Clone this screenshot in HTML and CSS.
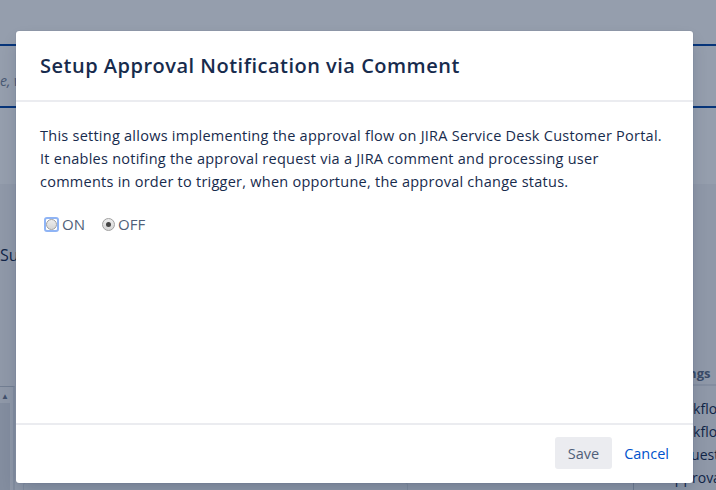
FILE: index.html
```html
<!DOCTYPE html>
<html lang="en">
<head>
    <meta charset="UTF-8">
    <title>Setup Approval Notification</title>
    <link rel="stylesheet" href="styles.css">
</head>
<body>
    <!-- page behind the dialog -->
    <div class="page">
        <div class="page-top">
            <div class="rule"></div>
            <div class="hint">e, when</div>
            <div class="rule"></div>
        </div>
        <div class="page-main">
            <div class="section-title">Summary</div>
            <div class="lower">
                <div class="left-panel">
                    <div class="scroll-up">&#9650;</div>
                    <div class="scroll-box"></div>
                </div>
                <div class="bottom-box"></div>
                <div class="side-list">
                    <div class="side-head">Settings</div>
                    <div class="side-item">Workflow</div>
                    <div class="side-item">Workflow</div>
                    <div class="side-item">Request</div>
                    <div class="side-item">Approvals via</div>
                </div>
            </div>
        </div>
    </div>
    <div class="overlay"></div>

    <div class="dialog">
        <div class="dialog-header">
            <h2>Setup Approval Notification via Comment</h2>
        </div>
        <div class="dialog-body">
            <p>This setting allows implementing the approval flow on JIRA Service Desk Customer Portal. It enables notifing the approval request via a JIRA comment and processing user comments in order to trigger, when opportune, the approval change status.</p>
            <div class="choices">
                <label class="choice"><span class="focus-ring"><span class="radio"></span></span>ON</label>
                <label class="choice"><span class="radio checked"></span>OFF</label>
            </div>
        </div>
        <div class="dialog-footer">
            <button class="btn-save">Save</button>
            <a href="#" class="link-cancel">Cancel</a>
        </div>
    </div>
</body>
</html>
```

FILE: styles.css
```css
:root {
    --text: #172b4d;
    --muted: #505f79;
    --link: #0052cc;
    --line: #ebecf0;
}

html, body {
    margin: 0;
    height: 100%;
    overflow: hidden;
}

body {
    font-family: "Open Sans", "Noto Sans", sans-serif;
    color: var(--text);
    background: #fff;
    position: relative;
}

/* background page */
.page {
    height: 100%;
    display: flex;
    flex-direction: column;
}

.page-top {
    flex: 0 0 184px;
    background: #fff;
    padding-top: 44px;
    box-sizing: border-box;
    display: flex;
    flex-direction: column;
}

.rule {
    flex: 0 0 2px;
    background: #0747a6;
}

.hint {
    flex: 0 0 60px;
    line-height: 70px;
    font-style: italic;
    font-size: 14px;
    color: #7a869a;
    overflow: hidden;
}

.page-main {
    flex: 1;
    min-height: 0;
    overflow: hidden;
    background: #f4f5f7;
    display: flex;
    flex-direction: column;
}

.section-title {
    margin-top: 60px;
    font-size: 16px;
    line-height: 22px;
    color: var(--text);
}

.lower {
    flex: 1;
    display: flex;
    margin-top: 98px;
}

.left-panel {
    width: 13px;
    margin-top: 22px;
    border-top: 1px solid #c1c7d0;
    border-right: 2px solid #dfe1e6;
    padding-top: 2px;
}

.scroll-up {
    font-size: 8px;
    line-height: 14px;
    color: #6b778c;
    margin-left: 1px;
}

.scroll-box {
    height: 100px;
    background: #dfe1e6;
    width: 10px;
}

.bottom-box {
    width: 383px;
    margin: 118px 0 0 8px;
    border: 1px solid #dfe1e6;
    border-radius: 3px;
}

.side-list {
    margin-left: auto;
    width: 68px;
    font-size: 14px;
    border-left: 1px solid #c1c7d0;
    padding-left: 14px;
    white-space: nowrap;
    overflow: hidden;
}

.side-head {
    font-weight: 700;
    font-size: 13px;
    line-height: 18px;
    color: #5e6c84;
    border-bottom: 2px solid #dfe1e6;
    padding: 0 0 2px 10px;
    margin-bottom: 11px;
}

.side-item {
    line-height: 23px;
    padding-left: 18px;
}

.overlay {
    position: absolute;
    inset: 0;
    background: rgba(9, 30, 66, 0.43);
}

/* dialog */
.dialog {
    position: absolute;
    left: 16px;
    top: 31px;
    width: 677px;
    height: 452px;
    background: #fff;
    border-radius: 3px;
    box-shadow: 0 0 1px rgba(9,30,66,0.31), 0 8px 16px -4px rgba(9,30,66,0.25);
    display: flex;
    flex-direction: column;
}

.dialog-header {
    height: 69px;
    border-bottom: 2px solid var(--line);
    padding: 0 24px;
    display: flex;
    align-items: center;
}

.dialog-header h2 {
    margin: 0;
    font-size: 20px;
    font-weight: 600;
    letter-spacing: 0.5px;
    color: var(--text);
    padding-bottom: 1px;
}

.dialog-body {
    flex: 1;
    padding: 22px 24px;
}

.dialog-body p {
    margin: 0;
    line-height: 23px;
    font-size: 14.5px;
    letter-spacing: 0.25px;
}

.choices {
    display: flex;
    align-items: center;
    gap: 17px;
    margin-top: 21px;
    color: var(--muted);
    font-size: 15px;
}

.choice {
    display: flex;
    align-items: center;
    gap: 3px;
}

.focus-ring {
    display: flex;
    border: 2px solid #8fb4f5;
    border-radius: 3px;
    margin-left: 4px;
}

.focus-ring .radio {
    width: 9px;
    height: 9px;
}

.radio {
    width: 11px;
    height: 11px;
    border-radius: 50%;
    border: 1px solid #a0a0a0;
    background: linear-gradient(#ededed, #d6d6d6);
    position: relative;
}

.radio.checked::after {
    content: "";
    position: absolute;
    left: 3px;
    top: 3px;
    width: 5px;
    height: 5px;
    border-radius: 50%;
    background: #444;
}

.dialog-footer {
    height: 56px;
    border-top: 2px solid var(--line);
    display: flex;
    align-items: center;
    justify-content: flex-end;
    gap: 12px;
    padding: 0 24px 2px;
}

.btn-save {
    font-family: inherit;
    font-size: 14.5px;
    color: var(--muted);
    background: #ebecf0;
    border: 0;
    border-radius: 3px;
    height: 32px;
    padding: 0 13px;
}

.link-cancel {
    font-size: 14.5px;
    color: var(--link);
    text-decoration: none;
}
```
